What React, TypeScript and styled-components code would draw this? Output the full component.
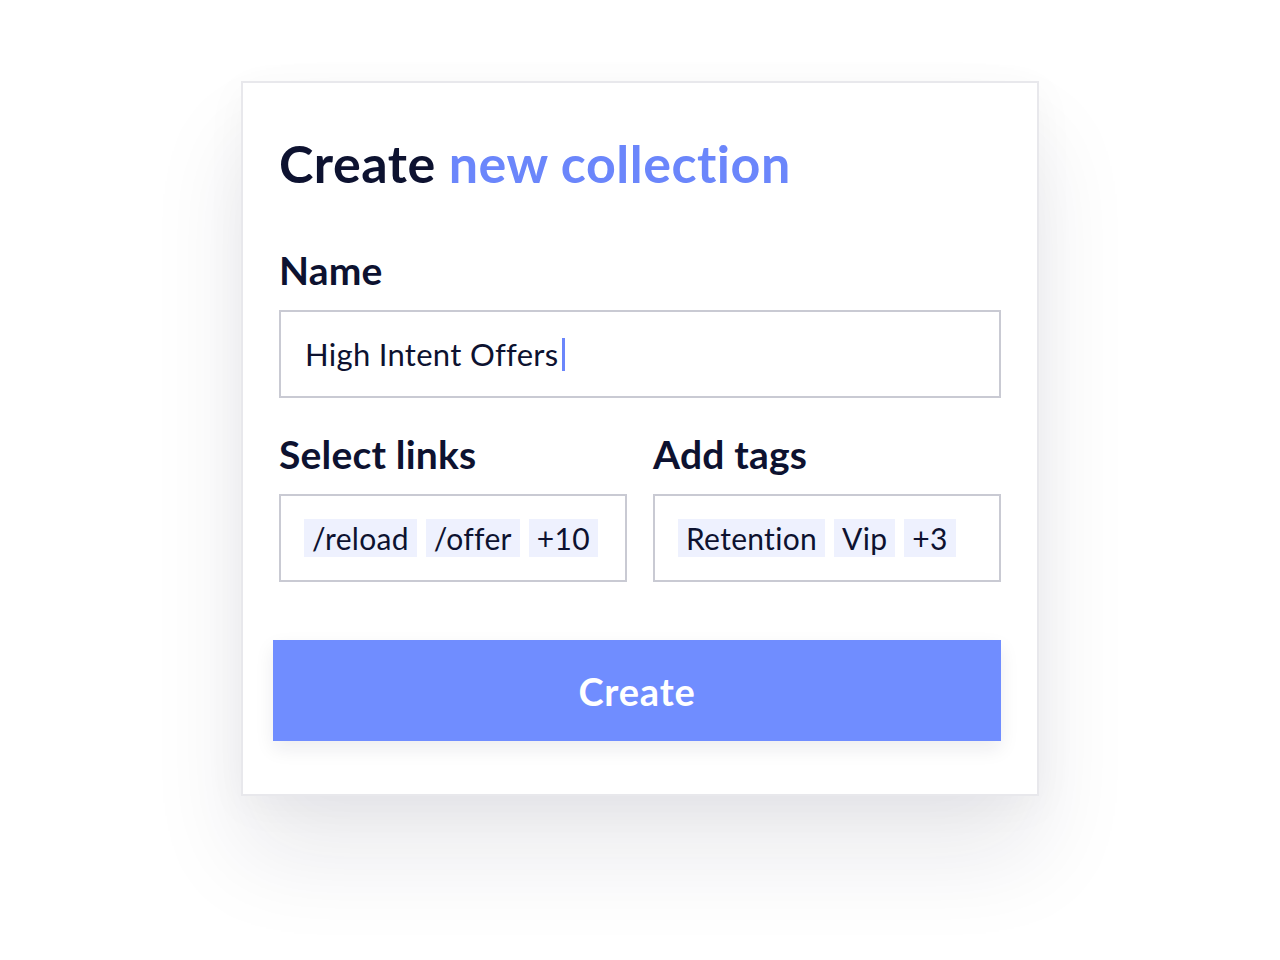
import styled, { createGlobalStyle } from 'styled-components'

const GlobalStyle = createGlobalStyle`
  html, body {
    margin: 0;
    padding: 0;
    background: #ffffff;
  }
  body {
    font-family: 'Lato', 'Inter', sans-serif;
    color: #0d1230;
  }
`;

const Page = styled.div`
  width: 1280px;
  height: 960px;
  display: flex;
  justify-content: center;
  align-items: flex-start;
  padding-top: 81px;
  box-sizing: border-box;
  overflow: hidden;
`;

const Card = styled.div`
  width: 798px;
  height: 715px;
  box-sizing: border-box;
  border: 2px solid #e8e8ec;
  background: #ffffff;
  padding: 50px 36px 0 36px;
  box-shadow: 0 60px 90px rgba(20, 24, 50, 0.09), 0 10px 40px rgba(20, 24, 50, 0.04);
  display: flex;
  flex-direction: column;
`;

const Title = styled.h1`
  margin: 0;
  font-size: 52px;
  font-weight: 700;
  letter-spacing: 0.5px;
  line-height: 60px;
  color: #0d1230;
`;

const Accent = styled.span`
  color: #6b86fb;
`;

const Label = styled.div`
  font-size: 39px;
  font-weight: 700;
  letter-spacing: 0.2px;
  line-height: 44px;
  color: #0d1230;
  margin-bottom: 18px;
`;

const Field = styled.div<{ $top: number }>`
  margin-top: ${(p) => p.$top}px;
  min-width: 0;
`;

const Input = styled.div`
  height: 88px;
  box-sizing: border-box;
  border: 2px solid #c9cad3;
  padding: 0 24px;
  display: flex;
  align-items: center;
  font-size: 31px;
  letter-spacing: 0.3px;
  color: #0d1230;
`;

const Caret = styled.span`
  display: inline-block;
  width: 3px;
  height: 33px;
  background: #6b86fb;
  margin-left: 3px;
`;

const Row = styled.div`
  display: grid;
  grid-template-columns: minmax(0, 1fr) minmax(0, 1fr);
  column-gap: 26px;
`;

const ChipBox = styled.div`
  height: 88px;
  box-sizing: border-box;
  border: 2px solid #c9cad3;
  padding: 0 23px;
  display: flex;
  align-items: center;
  gap: 9px;
`;

const Chip = styled.span`
  flex: none;
  background: #eef1fe;
  height: 38px;
  padding: 0 8px;
  display: inline-flex;
  align-items: center;
  font-size: 30px;
  letter-spacing: 0.3px;
  color: #0d1230;
`;

const Button = styled.button`
  margin-top: 58px;
  margin-left: -6px;
  height: 101px;
  border: none;
  background: #708dff;
  color: #ffffff;
  font-family: inherit;
  font-size: 38px;
  font-weight: 700;
  letter-spacing: 0.8px;
  box-shadow: 0 8px 18px rgba(20, 24, 50, 0.08);
  cursor: pointer;
`;

export default function App() {
  return (
    <>
      <GlobalStyle />
      <Page>
        <Card>
          <Title>
            Create <Accent>new collection</Accent>
          </Title>
          <Field $top={55}>
            <Label>Name</Label>
            <Input>
              High Intent Offers
              <Caret />
            </Input>
          </Field>
          <Row>
            <Field $top={34}>
              <Label>Select links</Label>
              <ChipBox>
                <Chip>/reload</Chip>
                <Chip>/offer</Chip>
                <Chip>+10</Chip>
              </ChipBox>
            </Field>
            <Field $top={34}>
              <Label>Add tags</Label>
              <ChipBox>
                <Chip>Retention</Chip>
                <Chip>Vip</Chip>
                <Chip>+3</Chip>
              </ChipBox>
            </Field>
          </Row>
          <Button>Create</Button>
        </Card>
      </Page>
    </>
  )
}
